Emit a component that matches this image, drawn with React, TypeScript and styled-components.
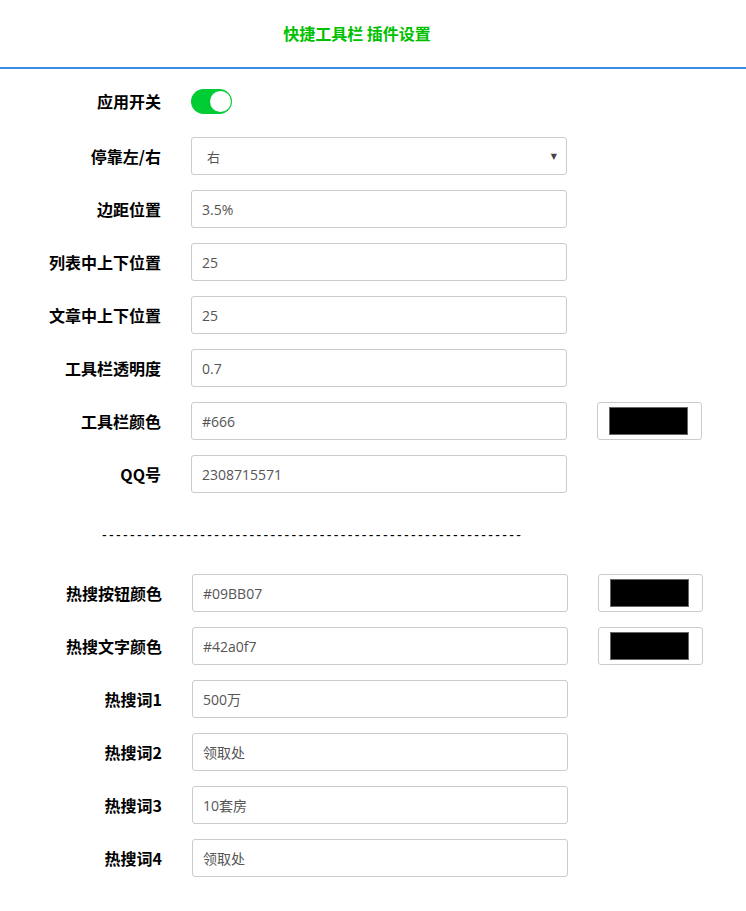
import React from "react"
import styled, { createGlobalStyle } from "styled-components"

const GlobalStyle = createGlobalStyle`
    html, body {
        margin: 0;
        padding: 0;
        background: #fff;
    }
    body {
        font-family: "Open Sans", "Noto Sans CJK SC", sans-serif;
        color: #000;
    }
`

type Field = { label: string; value: string; color?: boolean }

const topFields: Field[] = [
    { label: "边距位置", value: "3.5%" },
    { label: "列表中上下位置", value: "25" },
    { label: "文章中上下位置", value: "25" },
    { label: "工具栏透明度", value: "0.7" },
    { label: "工具栏颜色", value: "#666", color: true },
    { label: "QQ号", value: "2308715571" },
]

const hotFields: Field[] = [
    { label: "热搜按钮颜色", value: "#09BB07", color: true },
    { label: "热搜文字颜色", value: "#42a0f7", color: true },
    { label: "热搜词1", value: "500万" },
    { label: "热搜词2", value: "领取处" },
    { label: "热搜词3", value: "10套房" },
    { label: "热搜词4", value: "领取处" },
]

const FieldRow = ({ field }: { field: Field }) => (
    <Row>
        <Label>{field.label}</Label>
        <TextInput defaultValue={field.value} />
        {field.color && (
            <Swatch>
                <SwatchFill />
            </Swatch>
        )}
    </Row>
)

export default function App() {
    return (
        <>
            <GlobalStyle />
            <Header>
                <Title>快捷工具栏 插件设置</Title>
            </Header>
            <Form>
                <Section>
                    <Row $height={42}>
                        <Label>应用开关</Label>
                        <Toggle>
                            <Knob />
                        </Toggle>
                    </Row>
                    <Row>
                        <Label>停靠左/右</Label>
                        <Select>
                            <span>右</span>
                            <Caret>▼</Caret>
                        </Select>
                    </Row>
                    {topFields.map((f) => <FieldRow key={f.label} field={f} />)}
                </Section>
                <Divider>{"-".repeat(60)}</Divider>
                <Section $shift={1}>
                    {hotFields.map((f) => <FieldRow key={f.label} field={f} />)}
                </Section>
            </Form>
        </>
    )
}

const Header = styled.header`
    height: 69px;
    box-sizing: border-box;
    border-bottom: 2px solid #3a8ee6;
    display: flex;
    align-items: center;
    justify-content: center;
    padding-right: 32px;
`

const Title = styled.h1`
    margin: 0 0 2px;
    font-size: 16px;
    font-weight: bold;
    color: #00c000;
    font-family: "Noto Sans CJK SC", sans-serif;
`

const Form = styled.div`
    padding: 11px 0 40px;
`

const Section = styled.div<{ $shift?: number }>`
    display: flex;
    flex-direction: column;
    gap: 15px;
    padding-left: ${(p) => p.$shift ?? 0}px;
`

const Row = styled.div<{ $height?: number }>`
    display: flex;
    align-items: center;
    gap: 30px;
    min-height: ${(p) => p.$height ?? 38}px;
`

const Label = styled.div`
    width: 161px;
    text-align: right;
    font-family: "Noto Sans CJK SC", sans-serif;
    font-weight: bold;
    font-size: 16px;
    line-height: 20px;
    flex-shrink: 0;
`

const TextInput = styled.input`
    width: 376px;
    height: 38px;
    box-sizing: border-box;
    border: 1px solid #ccc;
    border-radius: 3px;
    padding: 0 10px;
    font-family: "Open Sans", "Noto Sans CJK SC", sans-serif;
    font-size: 14px;
    color: #555;
    outline: none;
    background: #fff;
`

const Select = styled.div`
    width: 376px;
    height: 38px;
    box-sizing: border-box;
    border: 1px solid #ccc;
    border-radius: 3px;
    padding: 0 9px 0 15px;
    display: flex;
    align-items: center;
    justify-content: space-between;
    font-family: "Noto Sans CJK SC", sans-serif;
    font-size: 13px;
    color: #555;
`

const Caret = styled.span`
    font-size: 8px;
    color: #444;
    font-family: "DejaVu Sans", sans-serif;
`

const Toggle = styled.div`
    width: 41px;
    height: 25px;
    border-radius: 13px;
    background: #00cc33;
    display: flex;
    align-items: center;
    justify-content: flex-end;
    padding: 0 1px;
    box-sizing: border-box;
`

const Knob = styled.div`
    width: 21px;
    height: 21px;
    border-radius: 50%;
    background: #fff;
`

const Swatch = styled.div`
    width: 105px;
    height: 38px;
    box-sizing: border-box;
    border: 1px solid #ccc;
    border-radius: 3px;
    display: flex;
    align-items: center;
    justify-content: center;
`

const SwatchFill = styled.div`
    width: 79px;
    height: 28px;
    box-sizing: border-box;
    background: #000;
    border: 1px solid #666;
    margin-right: 2px;
`

const Divider = styled.div`
    margin: 32px 0 29px 102px;
    font-family: "Liberation Sans", sans-serif;
    font-size: 14px;
    letter-spacing: 2.36px;
    line-height: 20px;
    color: #000;
    white-space: nowrap;
`
